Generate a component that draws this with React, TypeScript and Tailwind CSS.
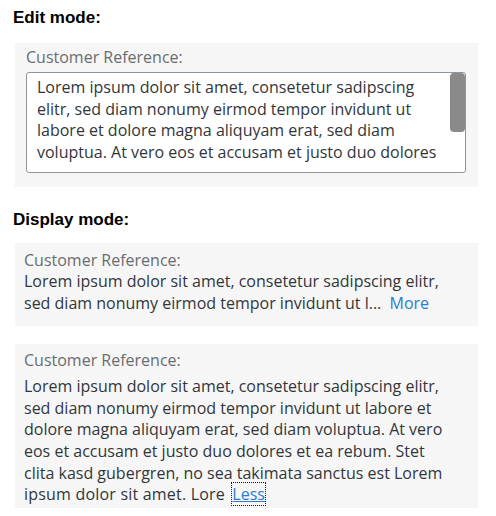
function Heading({ children }: { children: React.ReactNode }) {
  return (
    <h2 className="pl-[13px] font-['Liberation_Sans',Arial,sans-serif] text-[17px] font-bold leading-5 text-black">
      {children}
    </h2>
  )
}

function Label() {
  return <p className="text-[16px] leading-5 text-[#6a6d70]">Customer Reference:</p>
}

const editLines = [
  'Lorem ipsum dolor sit amet, consetetur sadipscing',
  'elitr, sed diam nonumy eirmod tempor invidunt ut',
  'labore et dolore magna aliquyam erat, sed diam',
  'voluptua. At vero eos et accusam et justo duo dolores',
]

const fullLines = [
  'Lorem ipsum dolor sit amet, consetetur sadipscing elitr,',
  'sed diam nonumy eirmod tempor invidunt ut labore et',
  'dolore magna aliquyam erat, sed diam voluptua. At vero',
  'eos et accusam et justo duo dolores et ea rebum. Stet',
  'clita kasd gubergren, no sea takimata sanctus est Lorem',
]

export default function App() {
  return (
    <div className="min-h-[516px] w-[496px] bg-white pt-[8px] font-['Open_Sans',sans-serif] text-[#32363a]">
      <Heading>Edit mode:</Heading>

      <div className="mx-[15px] mt-[15px] w-[463px] bg-[#f6f6f6] px-[11px] pb-[14px] pt-[4px]">
        <Label />
        <div className="relative mt-[5px] h-[101px] w-[440px] overflow-hidden rounded-[3px] border border-[#8f959c] bg-white">
          <div className="whitespace-nowrap py-[4px] pl-[10px] text-[16px] leading-[21.6px]">
            {editLines.map((line) => (
              <p key={line}>{line}</p>
            ))}
          </div>
          <div className="absolute right-[0px] top-[0px] h-[59px] w-[15px] rounded-[4px] bg-[#8a8a8a]" />
        </div>
      </div>

      <div className="mt-[23px]">
        <Heading>Display mode:</Heading>
      </div>

      <div className="mx-[15px] mt-[13px] w-[463px] bg-[#f6f6f6] px-[9px] pb-[12px] pt-[7px]">
        <Label />
        <div className="mt-[1px] whitespace-nowrap text-[16px] leading-[21.6px]">
          <p>Lorem ipsum dolor sit amet, consetetur sadipscing elitr,</p>
          <p>
            sed diam nonumy eirmod tempor invidunt ut l...{' '}
            <span className="ml-[4px] text-[#2b7cd3]">More</span>
          </p>
        </div>
      </div>

      <div className="mx-[15px] mt-[18px] w-[463px] bg-[#f6f6f6] px-[9px] pb-[2px] pt-[6px]">
        <Label />
        <div className="mt-[6px] whitespace-nowrap text-[16px] leading-[21.6px]">
          {fullLines.map((line) => (
            <p key={line}>{line}</p>
          ))}
          <p className="tracking-[0.2px]">
            ipsum dolor sit amet. Lore{' '}
            <span className="ml-[3px] tracking-normal text-[#2b7cd3] underline outline-1 outline-dotted outline-[#1a1a1a]">
              Less
            </span>
          </p>
        </div>
      </div>
    </div>
  )
}
